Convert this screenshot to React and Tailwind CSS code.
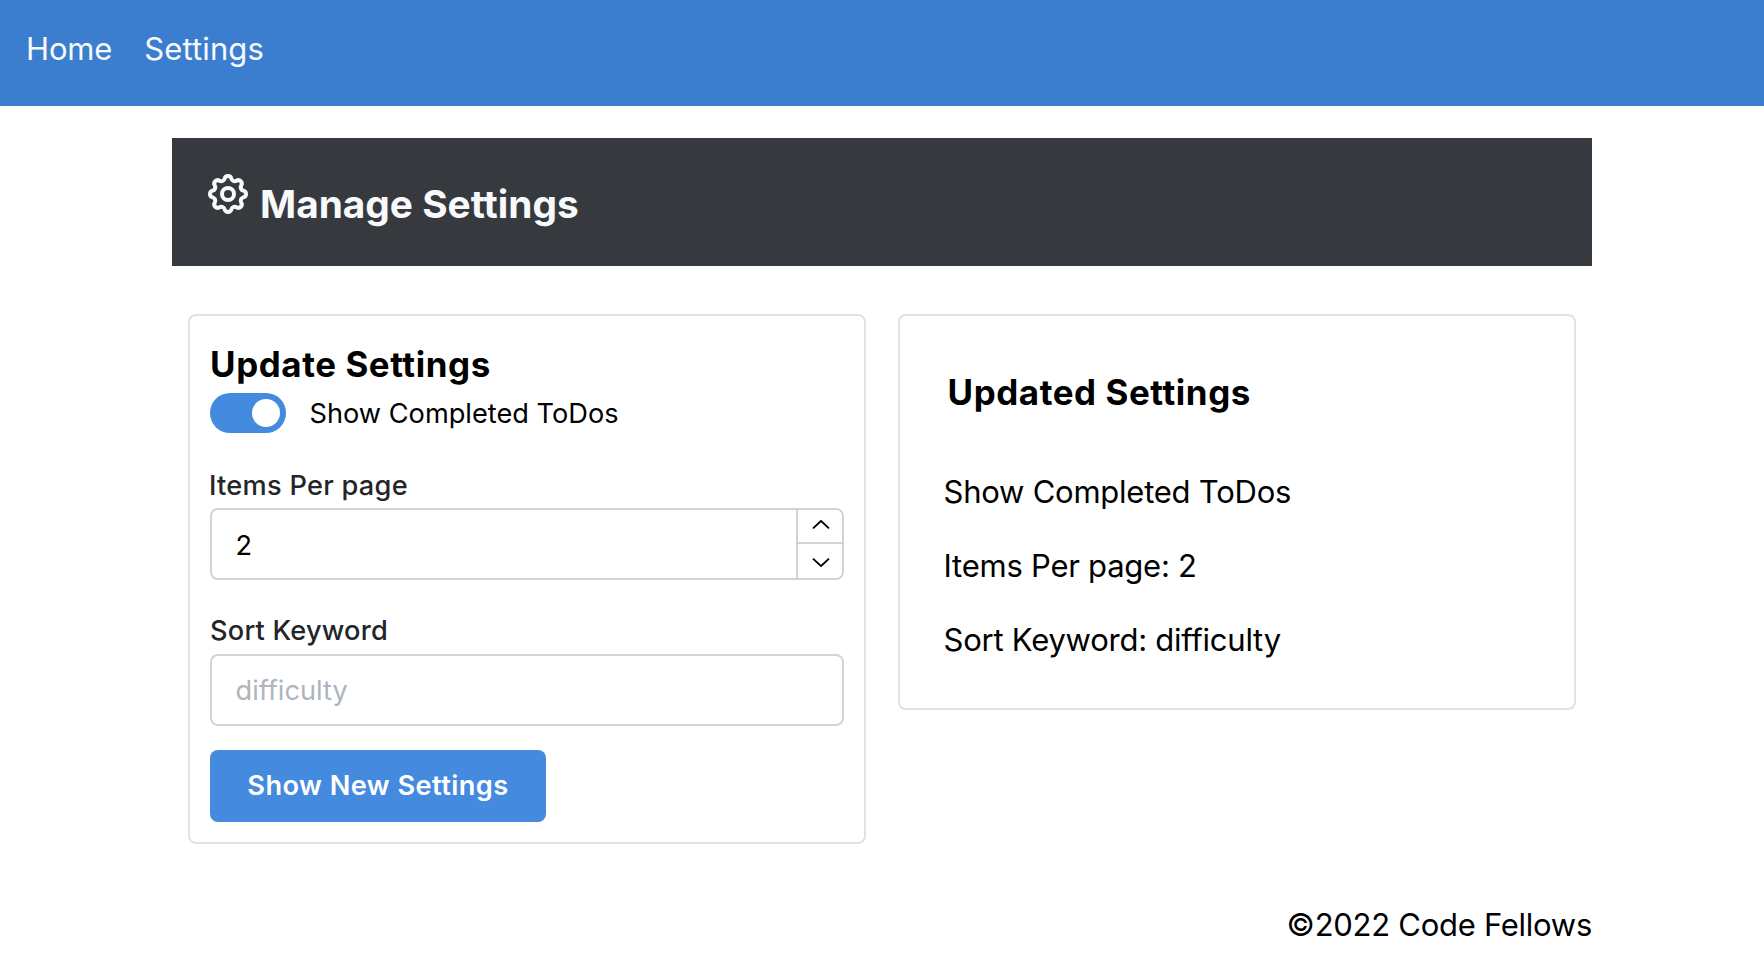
import { useState } from "react";

function GearIcon() {
  return (
    <svg
      className="size-12 shrink-0"
      viewBox="0 0 24 24"
      fill="none"
      stroke="currentColor"
      strokeWidth="2"
      strokeLinecap="round"
      strokeLinejoin="round"
    >
      <path d="M10.325 4.317c.426-1.756 2.924-1.756 3.35 0a1.724 1.724 0 0 0 2.573 1.066c1.543-.94 3.31.826 2.37 2.37a1.724 1.724 0 0 0 1.065 2.572c1.756.426 1.756 2.924 0 3.35a1.724 1.724 0 0 0-1.066 2.573c.94 1.543-.826 3.31-2.37 2.37a1.724 1.724 0 0 0-2.572 1.065c-.426 1.756-2.924 1.756-3.35 0a1.724 1.724 0 0 0-2.573-1.066c-1.543.94-3.31-.826-2.37-2.37a1.724 1.724 0 0 0-1.065-2.572c-1.756-.426-1.756-2.924 0-3.35a1.724 1.724 0 0 0 1.066-2.573c-.94-1.543.826-3.31 2.37-2.37 1 .608 2.296.07 2.572-1.065z" />
      <circle cx="12" cy="12" r="3" />
    </svg>
  );
}

function Chevron({ down = false }) {
  return (
    <svg className="ml-0.5 size-7" viewBox="0 0 15 15" fill="currentColor">
      <path
        transform={down ? "matrix(1 0 0 -1 0 15)" : undefined}
        d="M3.135 8.842c.189.201.505.212.707.023L7.5 5.435l3.658 3.43c.201.189.518.178.707-.023a.5.5 0 0 0-.023-.707l-4-3.75a.5.5 0 0 0-.684 0l-4 3.75a.5.5 0 0 0-.023.707z"
      />
    </svg>
  );
}

function Switch({ checked, onChange }) {
  return (
    <button
      role="switch"
      aria-checked={checked}
      onClick={() => onChange(!checked)}
      className={
        "flex h-10 w-[76px] items-center rounded-full px-1.5 " +
        (checked ? "justify-end bg-[#448adf]" : "justify-start bg-[#dfe2e6]")
      }
    >
      <span className="size-7 rounded-full bg-white" />
    </button>
  );
}

function SettingsForm({ shown, setShown, items, setItems }) {
  return (
    <section className="flex min-w-0 flex-col rounded-lg border-2 border-[#dfe2e6] p-5">
      <h2 className="text-[34.9px] leading-[57px] font-bold tracking-[0.59px]">Update Settings</h2>
      <div className="flex h-10 items-center">
        <Switch checked={shown} onChange={setShown} />
        <span className="ml-[23.5px] pt-0.5 text-[27.2px] leading-10">Show Completed ToDos</span>
      </div>

      <label className="mt-[31px] -ml-px text-[27.2px] leading-[43px] font-medium tracking-[0.27px] text-[#232529]">
        Items Per page
      </label>
      <div className="mt-px flex h-[72px] rounded-lg border-2 border-[#d0d4d9]">
        <span className="flex-1 pt-0.5 pl-[23.5px] text-[27.2px] leading-[68px]">{items}</span>
        <div className="flex w-[46px] flex-col border-l-2 border-[#d0d4d9]">
          <button
            onClick={() => setItems(items + 1)}
            className="flex h-[34px] items-center justify-center border-b-2 border-[#d0d4d9]"
          >
            <Chevron />
          </button>
          <button
            onClick={() => setItems(Math.max(1, items - 1))}
            className="flex h-[34px] items-center justify-center"
          >
            <Chevron down />
          </button>
        </div>
      </div>

      <label className="mt-[29px] text-[27.2px] leading-[43px] font-medium tracking-[0.2px] text-[#232529]">
        Sort Keyword
      </label>
      <input
        placeholder="difficulty"
        className="mt-0.5 h-[72px] rounded-lg border-2 border-[#d0d4d9] px-[23.5px] text-[27.2px] outline-none placeholder:text-[#afb5bd]"
      />

      <button className="mt-6 h-[72px] w-[336px] rounded-lg bg-[#448adf] pt-px text-[27.2px] font-semibold tracking-[0.44px] text-white">
        Show New Settings
      </button>
    </section>
  );
}

function SettingsSummary({ shown, items }) {
  return (
    <section className="h-[396px] min-w-0 rounded-lg border-2 border-[#dfe2e6] pt-12 pl-[43.5px]">
      <h2 className="pl-1 text-[34.9px] leading-[57px] font-bold tracking-[0.59px]">Updated Settings</h2>
      <div className="mt-[46px] flex flex-col gap-6 text-[31px] leading-[50px] tracking-[-0.24px]">
        <p>{shown ? "Show Completed ToDos" : "Hide Completed ToDos"}</p>
        <p>Items Per page: {items}</p>
        <p>Sort Keyword: difficulty</p>
      </div>
    </section>
  );
}

export default function App() {
  const [shown, setShown] = useState(true);
  const [items, setItems] = useState(2);

  return (
    <div className="min-h-screen bg-white font-[Inter,sans-serif] text-black">
      <nav className="flex h-[106px] gap-8 bg-[#3b7ecf] pt-[29px] pl-[26px] text-[31px] leading-10 text-[#f8f9fa]">
        <a className="tracking-[-0.16px]">Home</a>
        <a className="tracking-[0.14px]">Settings</a>
      </nav>

      <main className="mx-auto w-[1420px]">
        <header className="mt-8 flex h-32 items-start gap-2 bg-[#363a3e] p-8 text-[#f8f9fa]">
          <GearIcon />
          <h1 className="pt-[10px] text-[38.8px] leading-[48px] font-bold">Manage Settings</h1>
        </header>

        <div className="mt-12 grid grid-cols-2 items-start gap-8 px-4">
          <SettingsForm shown={shown} setShown={setShown} items={items} setItems={setItems} />
          <SettingsSummary shown={shown} items={items} />
        </div>

        <footer className="mt-14 text-right text-[31px] leading-[50px] tracking-[-0.27px]">
          ©2022 Code Fellows
        </footer>
      </main>
    </div>
  );
}
